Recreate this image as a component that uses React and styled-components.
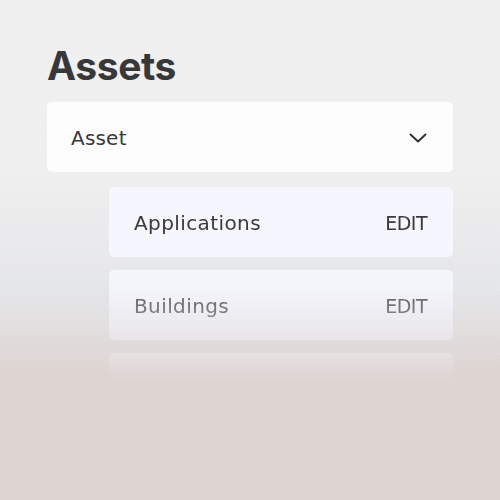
import React from 'react';
import styled, { createGlobalStyle } from 'styled-components';

const GlobalStyle = createGlobalStyle`
    html, body {
        margin: 0;
        padding: 0;
    }
    body {
        background: linear-gradient(
            to bottom,
            #f0f0f0 0px,
            #efefef 170px,
            #e5e6e9 290px,
            #ddd5d2 372px,
            #ddd5d2 500px
        );
        min-height: 500px;
        font-family: "DejaVu Sans", sans-serif;
    }
`;

const Page = styled.main`
    width: 500px;
    height: 500px;
    box-sizing: border-box;
    padding: 43px 47px 0 47px;
    display: flex;
    flex-direction: column;
`;

const Title = styled.h1`
    margin: 0 0 13px 0;
    color: #383838;
    font: 700 39px/46px "Inter", "Liberation Sans", sans-serif;
    letter-spacing: -0.4px;
`;

const Select = styled.div`
    height: 70px;
    box-sizing: border-box;
    padding: 2px 26px 0 24px;
    display: flex;
    align-items: center;
    justify-content: space-between;
    background-color: #fdfdfd;
    border-radius: 5px;
    color: #383838;
    font: 400 20px/24px "DejaVu Sans", sans-serif;
    letter-spacing: 0.2px;
`;

const List = styled.ul`
    list-style: none;
    margin: 15px 0 0 62px;
    padding: 0;
    display: flex;
    flex-direction: column;
    gap: 13px;
    -webkit-mask-image: linear-gradient(to bottom, #000 76px, rgba(0, 0, 0, 0.25) 168px, transparent 195px);
    mask-image: linear-gradient(to bottom, #000 76px, rgba(0, 0, 0, 0.25) 168px, transparent 195px);
`;

const Item = styled.li`
    height: 70px;
    box-sizing: border-box;
    padding: 1px 26px 0 25px;
    display: flex;
    align-items: center;
    justify-content: space-between;
    background-color: #f6f6fe;
    border-radius: 5px;
    color: #3a3a3a;
    font: 400 20px/24px "DejaVu Sans", sans-serif;
    letter-spacing: 0.4px;
`;

const Edit = styled.span`
    font-size: 19px;
    letter-spacing: -0.5px;
`;

const Chevron = () => (
    <svg width="18" height="10" viewBox="0 0 18 10" fill="none">
        <path d="M1.5 1.5 L9 8.5 L16.5 1.5" stroke="#333" strokeWidth="2" strokeLinecap="round" strokeLinejoin="round" />
    </svg>
);

const items = ['Applications', 'Buildings', 'Devices'];

function App() {
    return (
        <>
            <GlobalStyle />
            <Page>
                <Title>Assets</Title>
                <Select>
                    <span>Asset</span>
                    <Chevron />
                </Select>
                <List>
                    {items.map((name) => (
                        <Item key={name}>
                            <span>{name}</span>
                            <Edit>EDIT</Edit>
                        </Item>
                    ))}
                </List>
            </Page>
        </>
    );
}

export default App;
